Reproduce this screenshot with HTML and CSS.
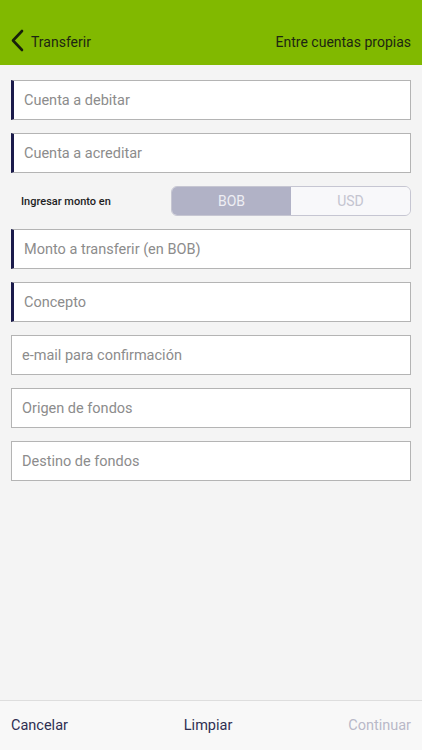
FILE: index.html
```html
<!DOCTYPE html>
<html lang="es">
<head>
  <meta charset="UTF-8">
  <meta name="viewport" content="width=device-width, initial-scale=1.0">
  <title>Transferir</title>
  <link rel="stylesheet" href="styles.css">
</head>
<body>
  <div class="topbar">
    <a class="back" href="#">
      <svg class="chevron" width="14" height="23" viewBox="0 0 14 23">
        <path d="M12 2 L3 11.5 L12 21" fill="none" stroke="#17210a" stroke-width="2.6" stroke-linecap="round" stroke-linejoin="round"/>
      </svg>
      <span>Transferir</span>
    </a>
    <span class="subtitle">Entre cuentas propias</span>
  </div>

  <form class="form">
    <input class="field required" type="text" placeholder="Cuenta a debitar">
    <input class="field required" type="text" placeholder="Cuenta a acreditar">

    <div class="currency">
      <span class="currency-label">Ingresar monto en</span>
      <div class="toggle">
        <button type="button" class="seg active">BOB</button>
        <button type="button" class="seg">USD</button>
      </div>
    </div>

    <input class="field required" type="text" placeholder="Monto a transferir (en BOB)">
    <input class="field required" type="text" placeholder="Concepto">
    <input class="field" type="text" placeholder="e-mail para confirmación">
    <input class="field" type="text" placeholder="Origen de fondos">
    <input class="field" type="text" placeholder="Destino de fondos">
  </form>

  <div class="bottombar">
    <a href="#" class="action">Cancelar</a>
    <a href="#" class="action">Limpiar</a>
    <a href="#" class="action disabled">Continuar</a>
  </div>
</body>
</html>
```

FILE: styles.css
```css
body {
  font-family: Roboto, "Noto Sans", sans-serif;
  background-color: #f4f4f4;
  margin: 0;
  padding: 0;
  display: flex;
  flex-direction: column;
  height: 100vh;
}

.topbar {
  background-color: #81b900;
  height: 65px;
  box-sizing: border-box;
  padding: 0 11px 13px 10px;
  display: flex;
  align-items: flex-end;
  justify-content: space-between;
  color: #1d2612;
  font-size: 14px;
}

.back {
  display: flex;
  align-items: center;
  gap: 7px;
  color: #1d2612;
  text-decoration: none;
}

.chevron {
  display: block;
}

.subtitle {
  padding-bottom: 2px;
}

.back span {
  padding-top: 2px;
}

.form {
  flex-grow: 1;
  padding: 15px 11px 0 11px;
  display: flex;
  flex-direction: column;
  gap: 13px;
}

.field {
  height: 40px;
  box-sizing: border-box;
  border: 1px solid #b4b4b4;
  border-radius: 0;
  background-color: #fff;
  padding: 0 10px;
  font-family: inherit;
  font-size: 14.5px;
  color: #333;
  outline: none;
}

.field.required {
  border-left: 3px solid #1b1b4b;
}

.field::placeholder {
  color: #8c8c8c;
}

.currency {
  display: flex;
  align-items: center;
  height: 30px;
  padding-left: 10px;
}

.currency-label {
  width: 150px;
  font-size: 11px;
  font-weight: 500;
  color: #1e1e1e;
}

.toggle {
  flex-grow: 1;
  display: flex;
  height: 30px;
  border: 1px solid #c6c6d2;
  border-radius: 6px;
  overflow: hidden;
  box-sizing: border-box;
}

.seg {
  flex: 1;
  border: none;
  background-color: #f8f8fa;
  color: #c4c4d0;
  font-family: inherit;
  font-size: 14px;
  padding: 0;
  cursor: pointer;
}

.seg.active {
  background-color: #b1b2c6;
  color: #eeeef4;
}

.bottombar {
  height: 50px;
  box-sizing: border-box;
  border-top: 1px solid #dedede;
  background-color: #f8f8f8;
  display: flex;
  align-items: center;
  justify-content: space-between;
  padding: 0 11px 0 11px;
}

.action {
  text-decoration: none;
  color: #2f2f52;
  font-size: 14.5px;
}

.action.disabled {
  color: #b9b9c8;
}
```
